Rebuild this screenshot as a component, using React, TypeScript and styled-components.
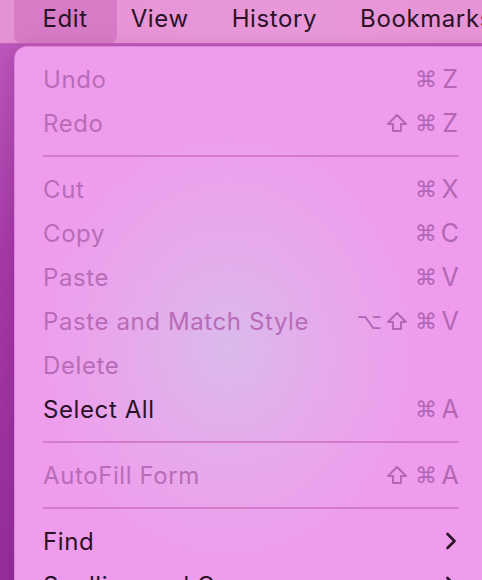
import React from "react";
import styled, { createGlobalStyle } from "styled-components";

const GlobalStyle = createGlobalStyle`
    html, body {
        margin: 0;
        padding: 0;
        width: 482px;
        height: 580px;
        overflow: hidden;
    }
    body {
        font-family: Inter, "Noto Sans", "DejaVu Sans", sans-serif;
        background: linear-gradient(180deg, #c25cc0 0%, #a53aa8 45%, #962d9c 100%);
    }
`;

type MenuItem =
    | { kind: "item"; label: string; keys?: string[]; disabled?: boolean; submenu?: boolean }
    | { kind: "separator" };

const items: MenuItem[] = [
    { kind: "item", label: "Undo", keys: ["⌘", "Z"], disabled: true },
    { kind: "item", label: "Redo", keys: ["⇧", "⌘", "Z"], disabled: true },
    { kind: "separator" },
    { kind: "item", label: "Cut", keys: ["⌘", "X"], disabled: true },
    { kind: "item", label: "Copy", keys: ["⌘", "C"], disabled: true },
    { kind: "item", label: "Paste", keys: ["⌘", "V"], disabled: true },
    { kind: "item", label: "Paste and Match Style", keys: ["⌥", "⇧", "⌘", "V"], disabled: true },
    { kind: "item", label: "Delete", disabled: true },
    { kind: "item", label: "Select All", keys: ["⌘", "A"] },
    { kind: "separator" },
    { kind: "item", label: "AutoFill Form", keys: ["⇧", "⌘", "A"], disabled: true },
    { kind: "separator" },
    { kind: "item", label: "Find", submenu: true },
    { kind: "item", label: "Spelling and Grammar", submenu: true },
];

const titles = ["Edit", "View", "History", "Bookmarks"];

// shift key drawn as an outlined arrow, DejaVu's glyph is too thin
const ShiftIcon = () => (
    <ShiftSvg viewBox="0 0 22 20">
        <path
            d="M11 2 L20 11 L15 11 L15 18 L7 18 L7 11 L2 11 Z"
            fill="none"
            stroke="currentColor"
            strokeWidth="2"
            strokeLinejoin="round"
        />
    </ShiftSvg>
);

const App = () => {
    return (
        <>
            <GlobalStyle />
            <Screen>
                <MenuBar>
                    {titles.map((t, i) => (
                        <MenuTitle key={t} active={i === 0}>
                            {t}
                        </MenuTitle>
                    ))}
                </MenuBar>
                <Dropdown>
                    {items.map((item, i) =>
                        item.kind === "separator" ? (
                            <Separator key={i} />
                        ) : (
                            <Row key={i} disabled={item.disabled}>
                                <Label>{item.label}</Label>
                                {item.keys && (
                                    <Keys>
                                        {item.keys.map((k, j) =>
                                            k === "⇧" ? (
                                                <ShiftIcon key={j} />
                                            ) : (
                                                <Key key={j} symbol={k === "⌘" || k === "⌥"}>
                                                    {k}
                                                </Key>
                                            )
                                        )}
                                    </Keys>
                                )}
                                {item.submenu && (
                                    <Chevron viewBox="0 0 12 20">
                                        <path
                                            d="M2.5 3 L9.5 10 L2.5 17"
                                            fill="none"
                                            stroke="currentColor"
                                            strokeWidth="2.6"
                                            strokeLinecap="round"
                                            strokeLinejoin="round"
                                        />
                                    </Chevron>
                                )}
                            </Row>
                        )
                    )}
                </Dropdown>
            </Screen>
        </>
    );
};

const Screen = styled.div`
    display: flex;
    flex-direction: column;
    width: 482px;
    height: 580px;
`;

const MenuBar = styled.nav`
    display: flex;
    align-items: stretch;
    height: 43px;
    padding-left: 21px;
    background: linear-gradient(90deg, #e592d5 0%, #e898d8 60%, #e793d6 100%);
    border-bottom: 1px solid #c860b8;
    flex-shrink: 0;
`;

const MenuTitle = styled.div<{ active?: boolean }>`
    display: flex;
    align-items: center;
    padding: ${({ active }) => (active ? "0 29px 6px" : "0 21.5px 6px")};
    margin: ${({ active }) => (active ? "0 -7.5px" : "0")};
    font-size: 24px;
    letter-spacing: 0.6px;
    white-space: nowrap;
    color: #2a1227;
    border-radius: 0 0 7px 7px;
    background: ${({ active }) => (active ? "#d77bc6" : "transparent")};
`;

const Dropdown = styled.ul`
    list-style: none;
    margin: 2px 0 0 14px;
    padding: 10px 0 0;
    width: 480px;
    flex-shrink: 0;
    border-radius: 13px;
    border: 1px solid rgba(190, 90, 180, 0.35);
    background:
        radial-gradient(ellipse 200px 230px at 214px 300px, rgba(218, 186, 236, 1) 0%, rgba(226, 176, 236, 0.8) 40%, rgba(239, 156, 236, 0) 100%),
        #ef9cec;
    box-shadow: 0 4px 18px rgba(90, 20, 90, 0.25);
`;

const Row = styled.li<{ disabled?: boolean }>`
    display: flex;
    align-items: center;
    height: 44px;
    padding: 0 0 0 28px;
    width: 416px;
    box-sizing: content-box;
    color: ${({ disabled }) => (disabled ? "#b86cb8" : "#2a1227")};
`;

const Label = styled.span`
    flex: 1;
    font-size: 24px;
    letter-spacing: 0.6px;
    white-space: nowrap;
`;

const Keys = styled.span`
    display: flex;
    align-items: center;
    gap: 4px;
    color: #b266b4;
`;

const Key = styled.span<{ symbol?: boolean }>`
    font-family: ${({ symbol }) => (symbol ? `"DejaVu Sans", sans-serif` : `Inter, "Noto Sans", sans-serif`)};
    font-size: ${({ symbol }) => (symbol ? "22px" : "25px")};
    min-width: ${({ symbol }) => (symbol ? "20px" : "18px")};
    text-align: center;
`;

const ShiftSvg = styled.svg`
    width: 22px;
    height: 20px;
    margin-right: 3px;
`;

const Chevron = styled.svg`
    width: 12px;
    height: 20px;
    margin-right: 2px;
    color: #2a1227;
`;

const Separator = styled.li`
    height: 22px;
    display: flex;
    align-items: center;
    margin-left: 28px;
    width: 416px;

    &::before {
        content: "";
        display: block;
        width: 100%;
        height: 2px;
        background: #d47bcc;
    }
`;

export default App;
